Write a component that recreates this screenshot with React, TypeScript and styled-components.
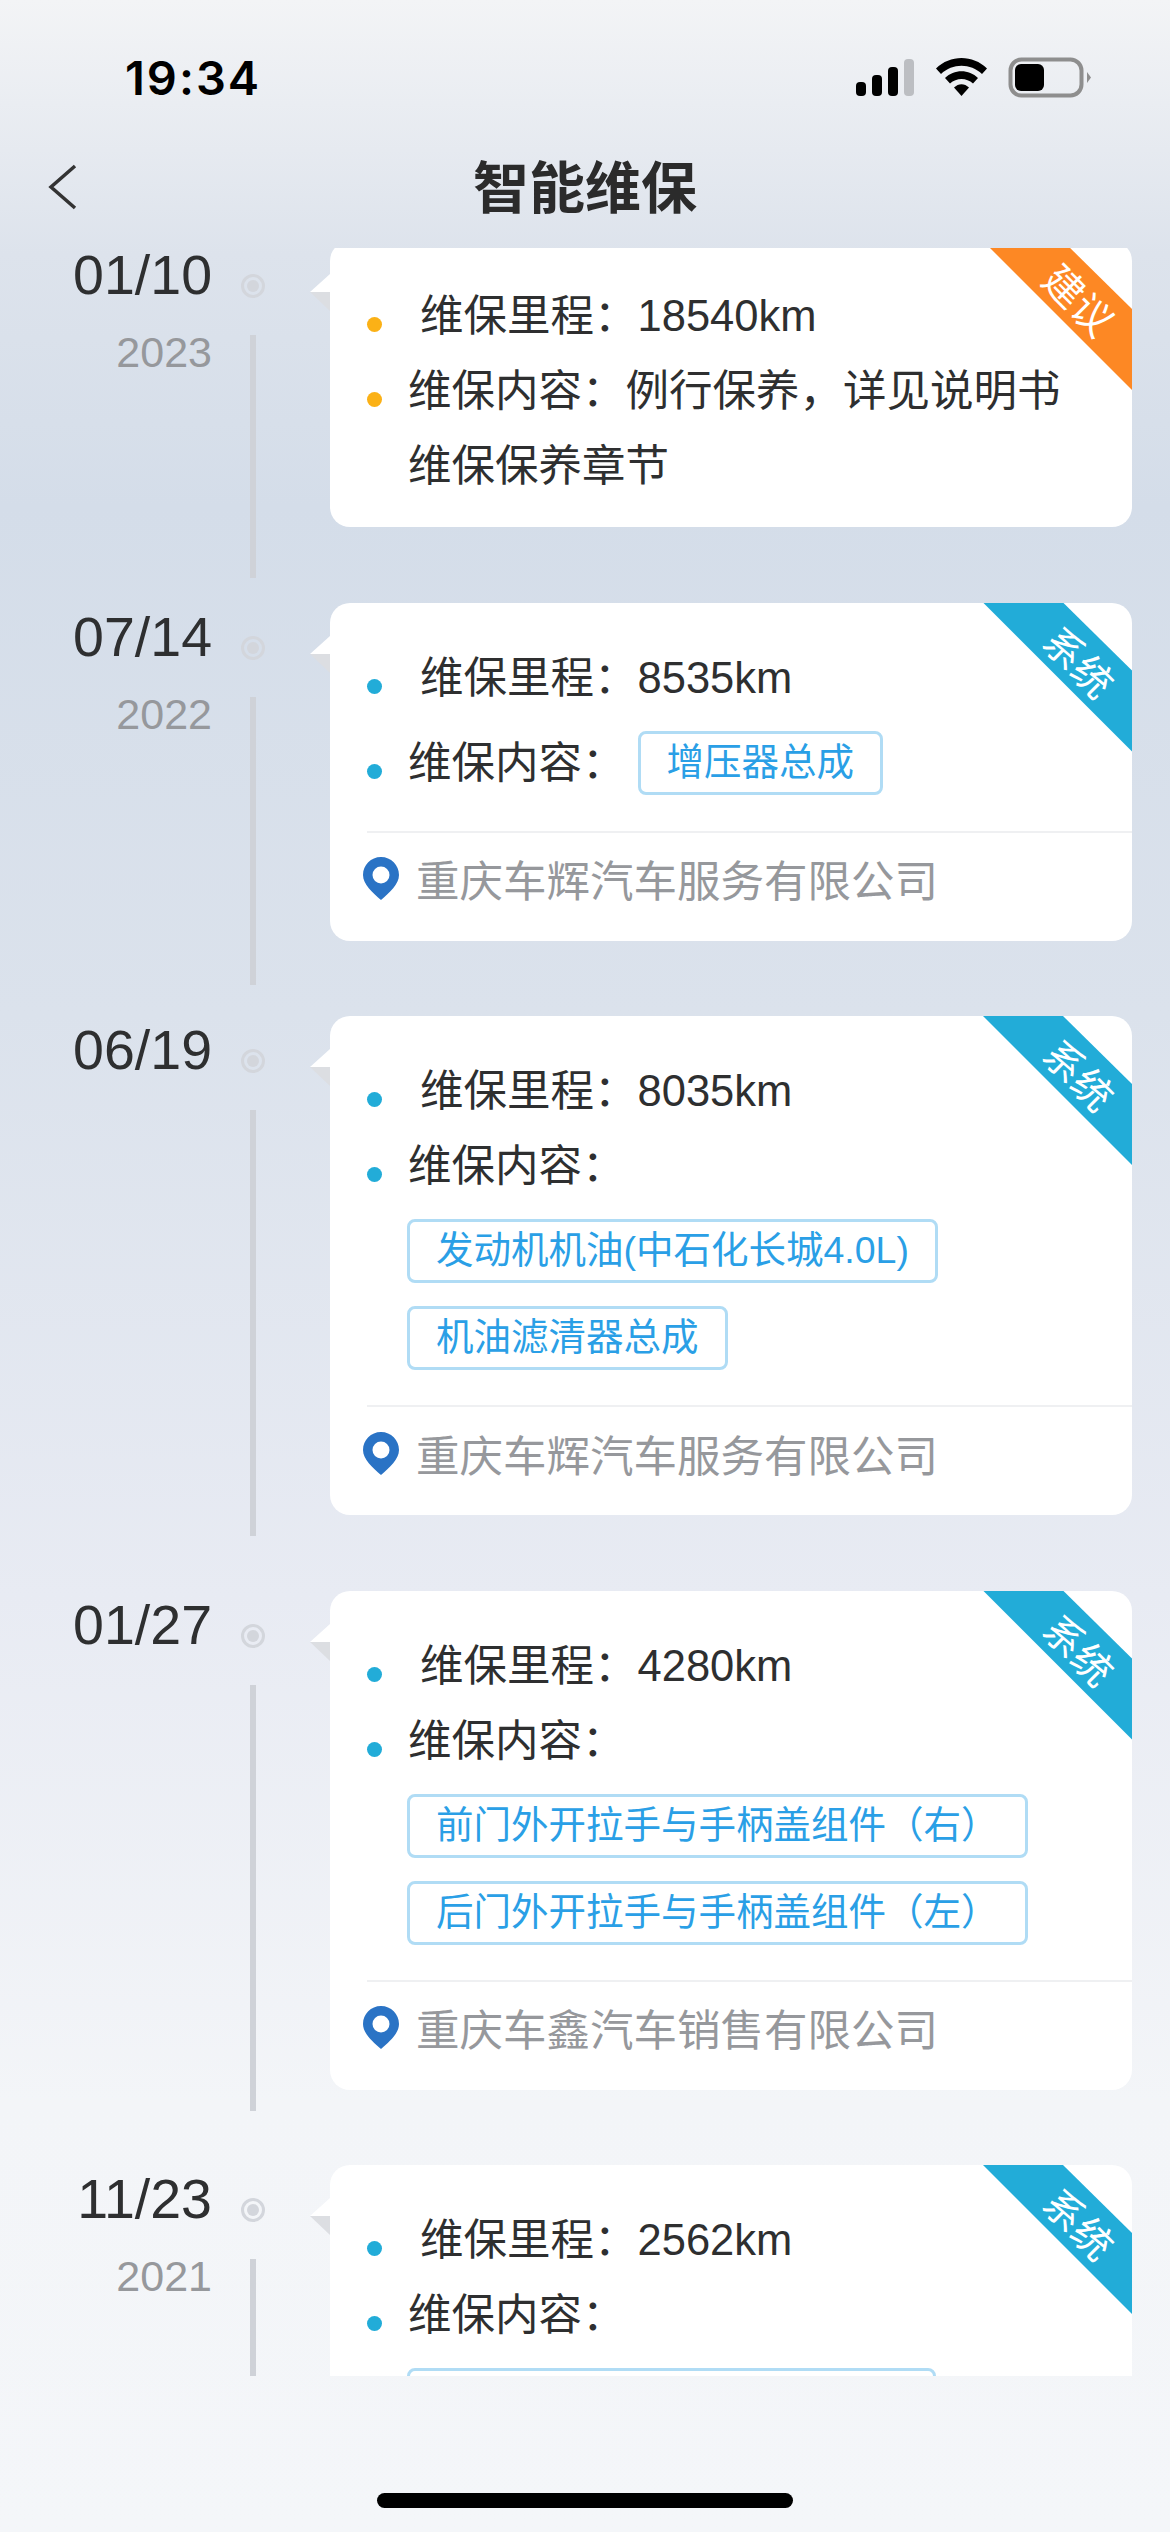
import React from 'react'
import styled, { createGlobalStyle } from 'styled-components'

const colors = {
  text: '#2e2f30',
  grey: '#96989c',
  rail: '#cfd2d8',
  orange: '#fd8824',
  amber: '#fbb116',
  blue: '#22acd8',
  tagText: '#2a9fe6',
  tagBorder: '#b0dcf5',
  pin: '#2a73c5',
}

const GlobalStyle = createGlobalStyle`
  html, body {
    margin: 0;
    padding: 0;
  }
  body {
    font-family: "Liberation Sans", "Noto Sans CJK SC", sans-serif;
  }
`

const Screen = styled.div`
  width: 1170px;
  height: 2532px;
  overflow: hidden;
  display: flex;
  flex-direction: column;
  background: linear-gradient(180deg, #f3f4f6 0%, #dde3ec 10%, #d4dde9 20%, #dbe2ec 40%, #e8ebf3 63%, #f3f5f8 83%, #f4f6f9 100%);
`
const StatusBar = styled.div`
  height: 140px;
  padding: 0 79px 0 125px;
  display: flex;
  justify-content: space-between;
  align-items: flex-start;
`
const Clock = styled.div`
  font-family: Inter, sans-serif;
  font-weight: 600;
  font-size: 47px;
  letter-spacing: 2px;
  line-height: 56px;
  margin-top: 50px;
  color: #000;
`
const StatusIcons = styled.svg`
  width: 240px;
  height: 45px;
  margin-top: 55px;
`
const NavBar = styled.div`
  height: 108px;
  position: relative;
  display: flex;
  justify-content: center;
  align-items: center;
`
const BackIcon = styled.svg`
  position: absolute;
  left: 46px;
  top: 24px;
  width: 34px;
  height: 46px;
`
const Title = styled.h1`
  margin: -22px 0 0;
  font-size: 56px;
  font-weight: 700;
  color: #2b2b2b;
`
const Viewport = styled.div`
  height: 2128px;
  overflow: hidden;
`
const Timeline = styled.div`
  margin-top: -7px;
  display: flex;
  flex-direction: column;
`
const Row = styled.div`
  display: flex;
  padding-bottom: 75.5px;
`
const DateCol = styled.div`
  width: 212px;
  flex: none;
  text-align: right;
`
const DateText = styled.div`
  font-size: 55.5px;
  line-height: 48px;
  margin-top: 10px;
  color: ${colors.text};
`
const YearText = styled.div`
  font-size: 43px;
  line-height: 50px;
  margin-top: 28px;
  color: ${colors.grey};
`
const Rail = styled.div`
  width: 82px;
  flex: none;
  display: flex;
  flex-direction: column;
  align-items: center;
  padding-top: 33px;
`
const RailDot = styled.div`
  width: 24px;
  height: 24px;
  box-sizing: border-box;
  border-radius: 50%;
  border: 3px solid #d3d6dc;
  display: flex;
  align-items: center;
  justify-content: center;
  flex: none;
  &::after {
    content: '';
    width: 12px;
    height: 12px;
    border-radius: 50%;
    background: #d3d6dc;
  }
`
const RailLine = styled.div<{ $extend: number }>`
  width: 6px;
  flex: 1;
  margin-top: 37px;
  margin-bottom: ${(p) => -p.$extend}px;
  background: ${colors.rail};
`
const CardWrap = styled.div`
  position: relative;
  width: 802px;
  margin-left: 36px;
  flex: none;
  &::before {
    content: '';
    position: absolute;
    left: -20px;
    top: 33px;
    border-right: 20px solid #fff;
    border-top: 18px solid transparent;
  }
  &::after {
    content: '';
    position: absolute;
    left: -20px;
    top: 51px;
    border-right: 20px solid #dcdee2;
    border-bottom: 19px solid transparent;
  }
`
const Card = styled.div<{ $bottom: number }>`
  position: relative;
  overflow: hidden;
  background: #fff;
  border-radius: 20px;
  padding: 38px 0 ${(p) => p.$bottom}px;
`
const Ribbon = styled.div<{ $color: string }>`
  position: absolute;
  top: 0;
  right: 0;
  width: 149px;
  height: 149px;
  background: ${(p) => p.$color};
  clip-path: polygon(0 0, 80px 0, 100% 68px, 100% 100%);
`
const RibbonText = styled.span`
  position: absolute;
  left: 95px;
  top: 60px;
  transform: translate(-50%, -50%) rotate(45deg);
  color: #fff;
  font-size: 40px;
  line-height: 1;
  white-space: nowrap;
`
const InfoRow = styled.div<{ $offset?: number }>`
  display: flex;
  padding-left: 37px;
  margin-top: ${(p) => p.$offset || 0}px;
  font-size: 43.5px;
  line-height: 75px;
  color: ${colors.text};
`
const Bullet = styled.span<{ $color: string }>`
  width: 15px;
  height: 15px;
  flex: none;
  border-radius: 50%;
  margin-top: 38px;
  background: ${(p) => p.$color};
`
const Label = styled.div<{ $indent?: boolean }>`
  margin-left: ${(p) => (p.$indent ? 38 : 26)}px;
  white-space: nowrap;
`
const Tag = styled.span<{ $minWidth?: number }>`
  display: inline-flex;
  align-items: center;
  box-sizing: border-box;
  height: 64px;
  min-width: ${(p) => p.$minWidth || 0}px;
  padding: 0 26px;
  border: 3px solid ${colors.tagBorder};
  border-radius: 8px;
  color: ${colors.tagText};
  font-size: 37.5px;
  line-height: 1;
  white-space: nowrap;
`
const InlineTag = styled(Tag)`
  margin: 5px 0 0 12px;
  vertical-align: top;
`
const TagList = styled.div`
  display: flex;
  flex-direction: column;
  align-items: flex-start;
  gap: 23px;
  padding: 15px 0 0 77px;
`
const Footer = styled.div<{ $offset: number }>`
  display: flex;
  align-items: center;
  margin: ${(p) => p.$offset}px 0 0 37px;
  height: 110px;
  padding-bottom: 16px;
  box-sizing: border-box;
  border-top: 2px solid #eff0f2;
  font-size: 43.5px;
  color: ${colors.grey};
`
const PinIcon = styled.svg`
  width: 36px;
  height: 43px;
  margin: 0 17px 0 -4px;
  flex: none;
`
const HomeBar = styled.div`
  flex: none;
  width: 416px;
  height: 15px;
  margin: 117px auto 0;
  border-radius: 8px;
  background: #000;
`

const Pin = () => (
  <PinIcon viewBox="0 0 36 43">
    <path
      d="M18 0C8 0 0 8 0 18c0 9.500 9.500 17.500 18 25 8.500-7.500 18-15.500 18-25C36 8 28 0 18 0z"
      fill={colors.pin}
    />
    <circle cx="18" cy="18" r="8.500" fill="#fff" />
  </PinIcon>
)

type Item = {
  date: string
  year?: string
  km: string
  kind: 'advice' | 'system'
  extend: number
  content?: string[]
  inlineTag?: string
  tags?: string[]
  blankTag?: number
  shop?: string
}

const items: Item[] = [
  { date: '01/10', year: '2023', km: '18540km', kind: 'advice', extend: 51, content: ['例行保养，详见说明书', '维保保养章节'] },
  { date: '07/14', year: '2022', km: '8535km', kind: 'system', extend: 44, inlineTag: '增压器总成', shop: '重庆车辉汽车服务有限公司' },
  { date: '06/19', km: '8035km', kind: 'system', extend: 21, tags: ['发动机机油(中石化长城4.0L)', '机油滤清器总成'], shop: '重庆车辉汽车服务有限公司' },
  { date: '01/27', km: '4280km', kind: 'system', extend: 21, tags: ['前门外开拉手与手柄盖组件（右）', '后门外开拉手与手柄盖组件（左）'], shop: '重庆车鑫汽车销售有限公司' },
  { date: '11/23', year: '2021', km: '2562km', kind: 'system', extend: 21, blankTag: 529 },
]

export default function App() {
  return (
    <Screen>
      <GlobalStyle />
      <StatusBar>
        <Clock>19:34</Clock>
        <StatusIcons viewBox="0 0 240 45">
          <rect x="5" y="27" width="10" height="14" rx="4" fill="#000" />
          <rect x="21" y="20" width="10" height="21" rx="4" fill="#000" />
          <rect x="37" y="12" width="10" height="29" rx="4" fill="#000" />
          <rect x="53" y="4" width="10" height="37" rx="4" fill="#bcbec2" />
          <path d="M85 13.500C99 -0.500 122 -0.500 136 13.500L131 19C119.500 8 101.500 8 90 19z" fill="#000" />
          <path d="M94 23C103 14 118 14 127 23L122 28.500C115.500 22.500 105.500 22.500 99 28.500z" fill="#000" />
          <path d="M103 32.500C107.500 28 113.500 28 118 32.500L110.500 41z" fill="#000" />
          <rect x="159.500" y="4.500" width="71" height="36" rx="11" fill="none" stroke="#8e8e8e" strokeWidth="4" />
          <rect x="164" y="9" width="29" height="27" rx="6" fill="#000" />
          <path d="M236 17l4 5.500-4 5.500z" fill="#8e8e8e" />
        </StatusIcons>
      </StatusBar>
      <NavBar>
        <BackIcon viewBox="0 0 34 46">
          <path d="M29 2L5 23l24 21" fill="none" stroke="#333" strokeWidth="3.500" />
        </BackIcon>
        <Title>智能维保</Title>
      </NavBar>
      <Viewport>
        <Timeline>
          {items.map((item) => {
            const accent = item.kind === 'advice' ? colors.amber : colors.blue
            return (
              <Row key={item.date}>
                <DateCol>
                  <DateText>{item.date}</DateText>
                  {item.year && <YearText>{item.year}</YearText>}
                </DateCol>
                <Rail>
                  <RailDot />
                  <RailLine $extend={item.extend} />
                </Rail>
                <CardWrap>
                  <Card $bottom={item.content ? 23 : 0}>
                    <Ribbon $color={item.kind === 'advice' ? colors.orange : colors.blue}>
                      <RibbonText>{item.kind === 'advice' ? '建议' : '系统'}</RibbonText>
                    </Ribbon>
                    <InfoRow>
                      <Bullet $color={accent} />
                      <Label $indent>维保里程：{item.km}</Label>
                    </InfoRow>
                    <InfoRow $offset={item.inlineTag ? 10 : 0}>
                      <Bullet $color={accent} />
                      <Label>
                        维保内容：
                        {item.content && item.content[0]}
                        {item.content && <br />}
                        {item.content && item.content[1]}
                        {item.inlineTag && <InlineTag>{item.inlineTag}</InlineTag>}
                      </Label>
                    </InfoRow>
                    {item.tags && (
                      <TagList>
                        {item.tags.map((t) => (
                          <Tag key={t}>{t}</Tag>
                        ))}
                      </TagList>
                    )}
                    {item.blankTag && (
                      <TagList>
                        <Tag $minWidth={item.blankTag} />
                      </TagList>
                    )}
                    {item.shop && (
                      <Footer $offset={item.inlineTag ? 30 : 35}>
                        <Pin />
                        {item.shop}
                      </Footer>
                    )}
                  </Card>
                </CardWrap>
              </Row>
            )
          })}
        </Timeline>
      </Viewport>
      <HomeBar />
    </Screen>
  )
}
